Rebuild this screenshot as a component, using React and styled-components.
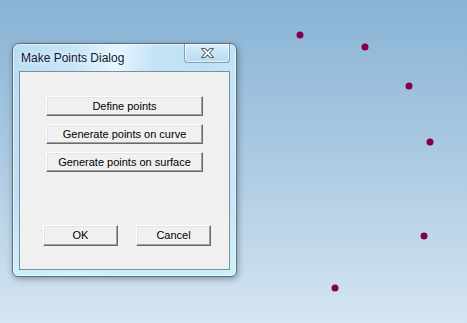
import styled, { createGlobalStyle } from "styled-components";

const GlobalStyle = createGlobalStyle`
  html, body {
    margin: 0;
    padding: 0;
  }
  body {
    width: 467px;
    height: 323px;
    overflow: hidden;
  }
`;

const Desktop = styled.div`
  position: relative;
  width: 467px;
  height: 323px;
  background: linear-gradient(180deg, #88b3d5 0%, #a9c8e1 45%, #d5e5f1 100%);
  overflow: hidden;
`;

const Point = styled.div`
  position: absolute;
  width: 7px;
  height: 7px;
  border-radius: 50%;
  background: #82004a;
  transform: translate(-50%, -50%);
`;

const Window = styled.div`
  position: absolute;
  left: 12px;
  top: 43px;
  width: 225px;
  height: 234px;
  box-sizing: border-box;
  border: 1px solid #5f6d78;
  border-radius: 7px 7px 6px 6px;
  background: linear-gradient(180deg, rgba(255, 255, 255, 0) 70%, #c8f2fa 100%),
    linear-gradient(
      100deg,
      #b9dcf3 0%,
      #c9e6f8 25%,
      #e6f5fd 40%,
      #c4e3f7 55%,
      #bfe1f6 75%,
      #c8eaf8 100%
    );
  box-shadow: 1px 2px 6px rgba(40, 60, 80, 0.45),
    inset 0 0 0 1px rgba(255, 255, 255, 0.6);
  display: flex;
  flex-direction: column;
  padding: 0 6px 6px 6px;
`;

const TitleBar = styled.div`
  height: 27px;
  display: flex;
  align-items: flex-start;
  justify-content: space-between;
`;

const Title = styled.span`
  font-family: "Liberation Sans", Arial, sans-serif;
  font-size: 12px;
  color: #101830;
  margin: 7px 0 0 2px;
  text-shadow: 0 0 6px rgba(255, 255, 255, 0.9);
`;

const CloseButton = styled.div`
  width: 46px;
  height: 19px;
  box-sizing: border-box;
  border: 1px solid #8a9db0;
  border-top: none;
  border-radius: 0 0 4px 4px;
  background: linear-gradient(180deg, #d9eefb 0%, #c4e2f6 60%, #bcdcf2 100%);
  box-shadow: inset 0 0 0 1px rgba(255, 255, 255, 0.6);
  display: flex;
  align-items: center;
  justify-content: center;
`;

const Client = styled.div`
  flex: 1;
  box-sizing: border-box;
  border: 1px solid #7d8e9e;
  background: #f0f0f0;
  display: flex;
  flex-direction: column;
  padding: 24px 0 0 0;
`;

const ActionList = styled.div`
  display: flex;
  flex-direction: column;
  gap: 8px;
  padding-left: 26px;
`;

const Button = styled.button`
  width: ${(p) => p.$w}px;
  height: ${(p) => p.$h}px;
  box-sizing: border-box;
  padding: 0 0 1px 0;
  margin: 0;
  font-family: "Liberation Sans", Arial, sans-serif;
  font-size: 11px;
  color: #000;
  background: #f0f0f0;
  border: 1px solid;
  border-color: #ffffff #6a6a6a #6a6a6a #ffffff;
  box-shadow: inset -1px -1px 0 #a0a0a0, inset 1px 1px 0 #e3e3e3;
  border-radius: 0;
  cursor: default;
`;

const Footer = styled.div`
  display: flex;
  gap: 18px;
  padding-left: 23px;
  margin-top: 53px;
`;

const points = [
  [299.5, 35],
  [365, 46.5],
  [409, 86],
  [430, 142],
  [424, 236],
  [335, 288],
];

const CloseGlyph = () => (
  <svg width="15" height="12" viewBox="0 0 15 12">
    <path
      d="M1.5 1.5 L5 1.5 L7.5 4.2 L10 1.5 L13.5 1.5 L9.6 6 L13.5 10.5 L10 10.5 L7.5 7.8 L5 10.5 L1.5 10.5 L5.4 6 Z"
      fill="#ffffff"
      stroke="#56606c"
      strokeWidth="1.1"
      strokeLinejoin="round"
    />
  </svg>
);

export default function App() {
  return (
    <Desktop>
      <GlobalStyle />
      {points.map(([x, y], i) => (
        <Point key={i} style={{ left: x, top: y }} />
      ))}
      <Window>
        <TitleBar>
          <Title>Make Points Dialog</Title>
          <CloseButton>
            <CloseGlyph />
          </CloseButton>
        </TitleBar>
        <Client>
          <ActionList>
            <Button $w={157} $h={20}>Define points</Button>
            <Button $w={157} $h={20}>Generate points on curve</Button>
            <Button $w={157} $h={20}>Generate points on surface</Button>
          </ActionList>
          <Footer>
            <Button $w={75} $h={21}>OK</Button>
            <Button $w={75} $h={21}>Cancel</Button>
          </Footer>
        </Client>
      </Window>
    </Desktop>
  );
}
